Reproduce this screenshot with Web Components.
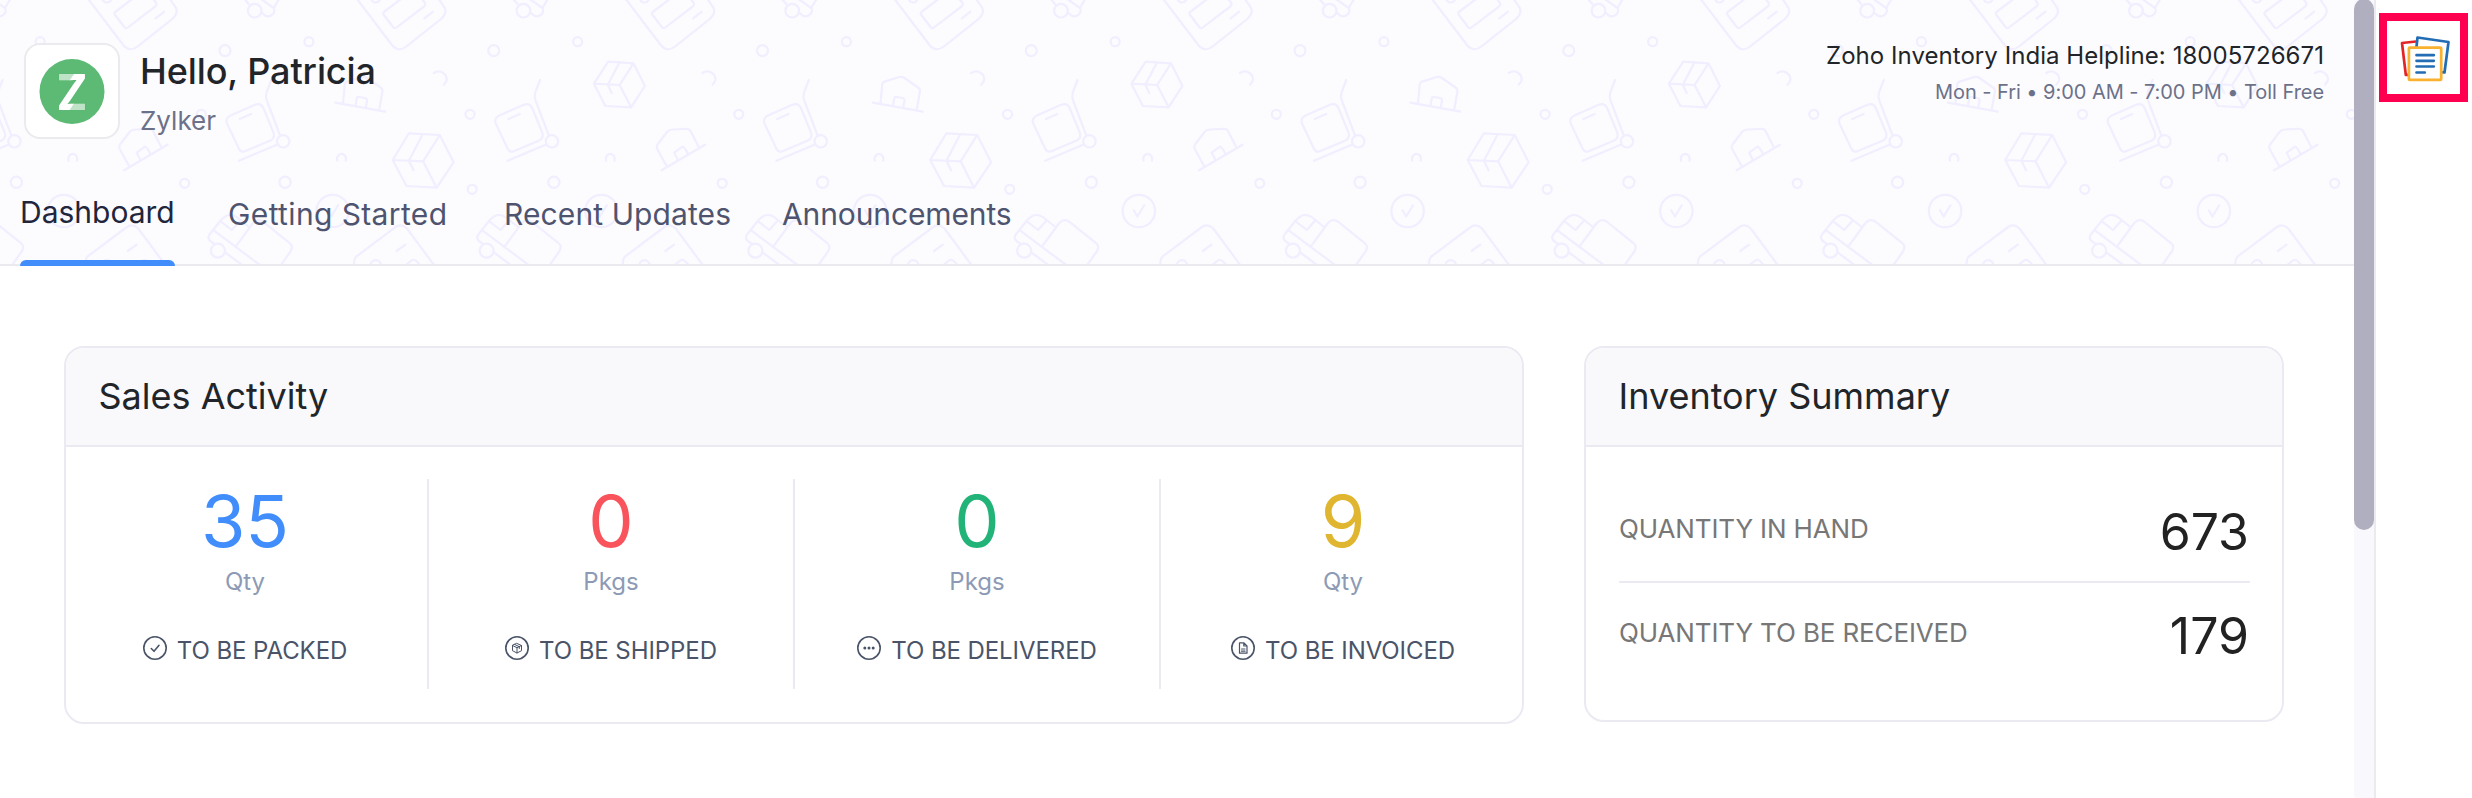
<!DOCTYPE html>
<html lang="en">
<head>
<meta charset="utf-8">
<title>Dashboard | Zoho Inventory</title>
<style>
  body {
    margin: 0;
    background: #fff;
    font-family: Inter, "Liberation Sans", sans-serif;
  }
</style>
</head>
<body>
<zi-app>
  <zi-header slot="header" name="Hello, Patricia" org="Zylker">
    <span slot="helpline">Zoho Inventory India Helpline: 18005726671</span>
    <span slot="hours">Mon - Fri • 9:00 AM - 7:00 PM • Toll Free</span>
    <zi-tab slot="tabs" active>Dashboard</zi-tab>
    <zi-tab slot="tabs" style="letter-spacing: .38px">Getting Started</zi-tab>
    <zi-tab slot="tabs" style="letter-spacing: .1px">Recent Updates</zi-tab>
    <zi-tab slot="tabs" style="letter-spacing: -.12px">Announcements</zi-tab>
  </zi-header>

  <zi-card class="sales">
    <span slot="title">Sales Activity</span>
    <zi-stats>
      <zi-stat value="35" unit="Qty" color="#408dfb" icon="check">TO BE PACKED</zi-stat>
      <zi-stat value="0" unit="Pkgs" color="#f9535c" icon="box">TO BE SHIPPED</zi-stat>
      <zi-stat value="0" unit="Pkgs" color="#22b378" icon="dots">TO BE DELIVERED</zi-stat>
      <zi-stat value="9" unit="Qty" color="#e0b52f" icon="file">TO BE INVOICED</zi-stat>
    </zi-stats>
  </zi-card>

  <zi-card class="summary">
    <span slot="title">Inventory Summary</span>
    <zi-summary-row value="673" first>QUANTITY IN HAND</zi-summary-row>
    <zi-summary-row value="179">QUANTITY TO BE RECEIVED</zi-summary-row>
  </zi-card>

  <zi-rail slot="rail"></zi-rail>
</zi-app>

<script>
class ZiElement extends HTMLElement {
  constructor() {
    super();
    this.attachShadow({ mode: 'open' });
  }

  connectedCallback() {
    this.shadowRoot.innerHTML = this.render();
  }
}

class ZiApp extends ZiElement {
  render() {
    return `
      <style>
        :host {
          display: grid;
          grid-template-columns: 2354px 20px 1fr;
          height: 798px;
          overflow: hidden;
        }
        .cards {
          display: grid;
          grid-template-columns: 1460px 700px;
          gap: 60px;
          align-items: start;
          padding: 80px 0 0 64px;
        }
        ::slotted(.sales) { height: 378px; }
        ::slotted(.summary) { height: 376px; }
        .scrollbar { background: #f8f8fd; }
        .thumb {
          height: 531px;
          margin-top: -1px;
          border-radius: 10px;
          background: #b0afbf;
        }
      </style>
      <main>
        <slot name="header"></slot>
        <div class="cards"><slot></slot></div>
      </main>
      <div class="scrollbar"><div class="thumb"></div></div>
      <slot name="rail"></slot>
    `;
  }
}

// Shapes found in every half of the wallpaper tile
const commonShapes = `
  <path d="M357 -1L392 45Q398.500 53 407 46L441 19Q448.500 12 443.500 6L438 -2"/>
  <path d="M422 -1L425 3Q426 5 424 6.500L396.500 27.500Q394.500 29 393 27L383.500 14.500Q382.500 13 384.500 11.500L401 -1"/>
  <path d="M424.300 18.300L433 11.700"/><circle cx="375.700" cy="-2" r="4.500"/>
  <path d="M354 265Q354 258.500 356.500 256.300L395 227.500Q401 223 407 228.500L434 265M396.600 251L405.300 244.700"/>
  <circle cx="375.700" cy="265.500" r="5.300"/><path d="M406 265L411.500 260.500Q414.500 258 419 264"/>
  <circle cx="254.700" cy="10.700" r="6.800"/>
  <path d="M244.500 -1L248.700 4M261.800 12.700L265 15.500Q269 18 273 14Q275.500 11 273.700 8L279 -1M273.700 8L261 -1"/>
  <circle cx="225" cy="50.700" r="5.500"/><circle cx="308.900" cy="41.700" r="4.500"/>
  <circle cx="201.300" cy="114.300" r="4.500"/><circle cx="285.100" cy="182.300" r="5.600"/>
  <path d="M271.300 80L266.500 92.500Q265.200 97 267 101L280 135.300"/><circle cx="283.200" cy="141.300" r="6.200"/>
  <path d="M278 144.300L238.900 160.700M239.700 119L251.100 114"/>
  <path d="M230.500 115.400L255 104.800Q261 102.500 263.500 108.300L273.500 132.500Q275.300 138 270.500 140.400L245 151.200Q240.700 153 238.700 148.300L227 123.500Q225 118.500 230.500 115.400Z"/>
  <path d="M165 73Q168 71 171.500 71.500Q178 74 178 79Q178 82 175 84.700"/>
  <path d="M337.300 160.700A4.500 5 0 1 1 345.700 160.700"/>
  <circle cx="332.600" cy="211" r="16.200"/><path d="M327.500 210.300L331.200 216.500L338 205.300"/>
  <path d="M214 243.500L211.500 242Q207 239 209.200 235L221 220Q226 215 230 215Q234 215 236.500 217L249.200 227"/>
  <circle cx="217.900" cy="250.700" r="7"/>
  <path d="M235.700 246.700L253 223Q258 218 263.500 222L290 243.300Q293.500 246.500 290.500 251.500L281 265"/>
  <path d="M214 230.700L260 265M225 252.300L242 265M221 221.700L231.800 230L240 220.700"/>
`;

// Shapes drawn once per full tile
const wideShapes = `
  <path d="M335.400 102.700L385.200 111.700M342.900 104L344.800 84Q345 82.300 347 81.600L361 77.300Q364.300 76.300 367 78L380.500 87.500Q382.800 89 382.400 91.500L379.200 110"/>
  <path d="M355.500 105.300L356.700 98.500Q357 96.700 359 97L365 98Q367.300 98.500 367 101L365.800 107.300"/>
  <path d="M408.900 133.300L439.700 135L453.600 162.300L436.600 187.700L406.500 186L392.700 160ZM392.700 160L423.100 161.300L436.600 187.700M423.100 161.300L439.700 135M422.700 134.300L408.900 160.700L413.600 170.300"/>
  <path d="M608.200 61.700L633.500 63.300L644.900 86L631.100 107.300L605.400 106L593.900 83.700ZM593.900 83.700L619.600 85L631.100 107.300M619.600 85L633.500 63.300M619.600 62.300L607.800 84.700L611.700 93"/>
  <path d="M661.600 170.300L705 144.700M666.700 166.300L657.200 149Q656 147 657.500 144.500L667 132Q669 129.700 673 129.500L686 128.800Q689 128.700 690.400 130.700L698.700 147"/>
  <path d="M677.800 159.700L674.200 152.700L682.500 146.700Q684 146.300 688 154"/>
  <circle cx="184.700" cy="183.300" r="4.500"/><circle cx="472.200" cy="189.300" r="4.500"/>
`;

class ZiWallpaper extends ZiElement {
  render() {
    const half = 268.75;
    let uses = '';
    for (let i = -2; i < 9; i++) {
      uses += `<use href="#common" x="${i * half}"/>`;
      if (i % 2 === 0) {
        uses += `<use href="#wide" x="${i * half}"/>`;
      }
    }
    return `
      <style>
        :host { display: block; overflow: hidden; }
        svg { display: block; fill: none; stroke: #f0eeff; stroke-width: 2.200; stroke-linecap: round; stroke-linejoin: round; }
      </style>
      <svg width="2354" height="264">
        <defs><g id="common">${commonShapes}</g><g id="wide">${wideShapes}</g></defs>
        ${uses}
      </svg>
    `;
  }
}

class ZiLogo extends ZiElement {
  render() {
    return `
      <style>
        :host {
          display: block;
          box-sizing: border-box;
          width: 96px;
          height: 96px;
          border: 2px solid #ebebef;
          border-radius: 16px;
          background: #fff;
        }
        svg { display: block; }
        text { font: 700 50px Inter, sans-serif; fill: #fff; }
      </style>
      <svg width="92" height="92" viewBox="0 0 92 92">
        <circle cx="46" cy="46.500" r="32.500" fill="#5cba74"/>
        <text x="30.500" y="65" textLength="31" lengthAdjust="spacingAndGlyphs">Z</text>
        <path d="M31 28H49L43 36H31Z" fill="#5cba74" opacity=".4"/>
        <path d="M61 66H43L49 57H61Z" fill="#5cba74" opacity=".4"/>
      </svg>
    `;
  }
}

class ZiHeader extends ZiElement {
  render() {
    return `
      <style>
        :host {
          display: grid;
          height: 264px;
          border-bottom: 2px solid #ebebef;
          background: #fcfcfe;
        }
        zi-wallpaper, .content { grid-area: 1 / 1; }
        .content { z-index: 1; }
        .top {
          display: flex;
          height: 136px;
          padding: 43px 30px 0 24px;
        }
        .user { flex: 1; padding: 8px 0 0 20px; }
        .name { font-size: 36px; line-height: 40px; font-weight: 500; letter-spacing: -.1px; color: #212529; }
        .org { margin-top: 14px; font-size: 26px; line-height: 32px; color: #6c718a; }
        .help { margin-top: -3px; text-align: right; }
        .helpline { font-size: 24px; line-height: 32px; letter-spacing: .05px; color: #212529; }
        .hours { margin-top: 6px; font-size: 20px; line-height: 28px; letter-spacing: -.05px; color: #6c718a; }
        nav {
          display: grid;
          grid-template-columns: 208px 276px 278px auto;
          height: 87px;
          padding-left: 20px;
        }
      </style>
      <zi-wallpaper></zi-wallpaper>
      <div class="content">
        <div class="top">
          <zi-logo></zi-logo>
          <div class="user">
            <div class="name">${this.getAttribute('name')}</div>
            <div class="org">${this.getAttribute('org')}</div>
          </div>
          <div class="help">
            <div class="helpline"><slot name="helpline"></slot></div>
            <div class="hours"><slot name="hours"></slot></div>
          </div>
        </div>
        <nav><slot name="tabs"></slot></nav>
      </div>
    `;
  }
}

class ZiTab extends ZiElement {
  render() {
    return `
      <style>
        :host {
          display: flex;
          flex-direction: column;
          justify-content: space-between;
          justify-self: start;
          font-size: 30px;
          line-height: 70px;
          color: #4e5470;
        }
        :host([active]) { width: 155px; line-height: 66px; color: #21263c; }
        :host([active]) .bar { height: 6px; border-radius: 6px 6px 0 0; background: #408dfb; }
      </style>
      <div><slot></slot></div>
      <div class="bar"></div>
    `;
  }
}

class ZiCard extends ZiElement {
  render() {
    return `
      <style>
        :host {
          display: block;
          box-sizing: border-box;
          border: 2px solid #ebeaf2;
          border-radius: 20px;
          background: #fff;
          overflow: hidden;
        }
        header {
          height: 97px;
          padding-left: 32.500px;
          border-bottom: 2px solid #ebeaf2;
          background: #f9f9fb;
          font-size: 36px;
          line-height: 96px;
          color: #212529;
        }
      </style>
      <header><slot name="title"></slot></header>
      <slot></slot>
    `;
  }
}

class ZiStats extends ZiElement {
  render() {
    return `
      <style>
        :host {
          display: grid;
          grid-template-columns: repeat(4, 366px);
          margin: 32px 0 0 -3px;
        }
      </style>
      <slot></slot>
    `;
  }
}

const icons = {
  check: '<path d="M8.300 12.500L11 15.300L16 9.300" stroke-width="1.600"/>',
  box: '<path d="M12 7.500L16.500 9.500V14.700L12 17L7.500 14.700V9.500ZM7.500 9.500L12 11.700L16.500 9.500M12 11.700V17M9.700 8.500L14.300 10.700V12.500" stroke-width="1"/>',
  dots: '<g fill="#4a5468" stroke="none"><circle cx="7.800" cy="12" r="1.500"/><circle cx="12" cy="12" r="1.500"/><circle cx="16.200" cy="12" r="1.500"/></g>',
  file: '<path d="M9 6.800H13L16 9.800V17.200H8.500V6.800ZM12.800 7V10H16M10.500 13H14M10.500 15.200H14" stroke-width="1.200"/>'
};

class ZiStat extends ZiElement {
  render() {
    return `
      <style>
        :host {
          display: block;
          box-sizing: border-box;
          height: 210px;
          padding-top: 2px;
          border-right: 2px solid #ebeaf2;
          text-align: center;
        }
        :host(:last-child) { border-right-color: transparent; }
        .value { font-size: 72px; line-height: 80px; }
        .unit { margin-top: 6px; font-size: 24px; line-height: 30px; color: #8d9ab5; }
        .label {
          display: flex;
          justify-content: center;
          gap: 10px;
          margin-top: 39px;
          font-size: 24px;
          line-height: 30px;
          letter-spacing: -.08px;
          color: #4a5468;
        }
        svg { fill: none; stroke: #4a5468; stroke-width: 1.600; stroke-linecap: round; stroke-linejoin: round; }
      </style>
      <div class="value" style="color: ${this.getAttribute('color')}">${this.getAttribute('value')}</div>
      <div class="unit">${this.getAttribute('unit')}</div>
      <div class="label">
        <svg width="24" height="24" viewBox="0 0 24 24"><circle cx="12" cy="12" r="11.200"/>${icons[this.getAttribute('icon')]}</svg>
        <span><slot></slot></span>
      </div>
    `;
  }
}

class ZiSummaryRow extends ZiElement {
  render() {
    return `
      <style>
        :host {
          display: flex;
          justify-content: space-between;
          margin: 0 32px 0 33px;
          padding-top: 20px;
          line-height: 60px;
        }
        :host([first]) {
          height: 82px;
          padding-top: 52px;
          border-bottom: 2px solid #ebeaf2;
        }
        .label { font-size: 26px; letter-spacing: -.13px; color: #777; }
        .value { margin: 3px 1px 0 0; font-size: 50px; color: #222; }
      </style>
      <div class="label"><slot></slot></div>
      <div class="value">${this.getAttribute('value')}</div>
    `;
  }
}

class ZiRail extends ZiElement {
  render() {
    return `
      <style>
        :host { display: block; border-left: 2px solid #ebebef; padding: 13px 0 0 3px; }
        .highlight {
          display: flex;
          align-items: center;
          justify-content: center;
          box-sizing: border-box;
          width: 89px;
          height: 89px;
          border: 8px solid #ff0050;
        }
        svg { fill: #fff; stroke-width: 2.700; stroke-linejoin: round; }
      </style>
      <div class="highlight">
        <svg width="54" height="48" viewBox="-1 0 54 48">
          <path d="M18 7.500L4 9L7.800 40.800H12" stroke="#e42527"/>
          <path d="M19.500 3.500L50.500 8L46.500 38.500L16 36Z" stroke="#226db4"/>
          <rect x="10.900" y="13.600" width="32.300" height="32.300" rx="1" stroke="#fab12f"/>
          <path d="M18.500 21.200H35.800M18.500 26.800H35.800M18.500 32.500H35.800M18.500 38.500H26.800" stroke="#226db4" stroke-linecap="round"/>
        </svg>
      </div>
    `;
  }
}

customElements.define('zi-app', ZiApp);
customElements.define('zi-wallpaper', ZiWallpaper);
customElements.define('zi-logo', ZiLogo);
customElements.define('zi-header', ZiHeader);
customElements.define('zi-tab', ZiTab);
customElements.define('zi-card', ZiCard);
customElements.define('zi-stats', ZiStats);
customElements.define('zi-stat', ZiStat);
customElements.define('zi-summary-row', ZiSummaryRow);
customElements.define('zi-rail', ZiRail);
</script>
</body>
</html>
